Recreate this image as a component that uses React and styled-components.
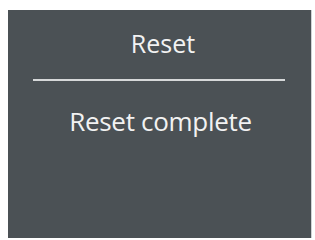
import React from "react";
import styled, { createGlobalStyle } from "styled-components";

const Global = createGlobalStyle`
  html, body { margin: 0; padding: 0; background: #ffffff; }
  body { font-family: "Open Sans", "Liberation Sans", sans-serif; }
`;

const Page = styled.div`
  padding: 10px 3px 2px 8px;
`;

const Panel = styled.div`
  width: 304px;
  height: 228px;
  box-sizing: border-box;
  background: #4b5155;
  border-right: 1px solid #cfd2d4;
  display: flex;
  flex-direction: column;
  align-items: center;
  padding-top: 18px;
`;

const Title = styled.div`
  font-size: 25px;
  font-weight: 500;
  line-height: 30px;
  color: #f2f2f2;
  margin-left: 7px;
`;

const Divider = styled.div`
  width: 252px;
  height: 2px;
  background: #d6d8d9;
  margin-top: 21px;
  margin-left: -2px;
`;

const Message = styled.div`
  font-size: 26px;
  font-weight: 500;
  line-height: 30px;
  color: #f2f2f2;
  margin-top: 25px;
  margin-left: 2px;
  letter-spacing: -0.3px;
`;

export default function App() {
  return (
    <>
      <Global />
      <Page>
        <Panel>
          <Title>Reset</Title>
          <Divider />
          <Message>Reset complete</Message>
        </Panel>
      </Page>
    </>
  );
}
